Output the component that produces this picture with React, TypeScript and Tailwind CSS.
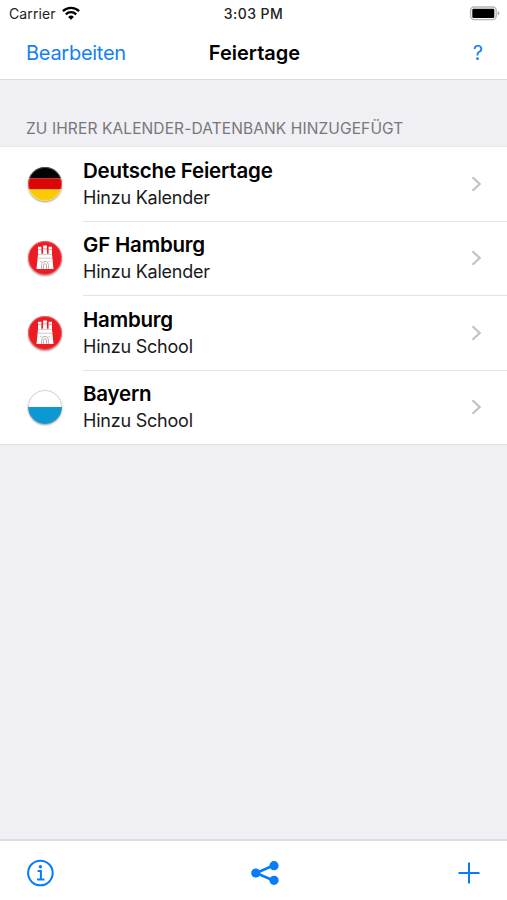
import clsx from "clsx"

type FlagName = "germany" | "hamburg" | "bavaria"

interface Holiday {
  id: number
  title: string
  subtitle: string
  flag: FlagName
}

const holidays: Holiday[] = [
  { id: 1, title: "Deutsche Feiertage", subtitle: "Hinzu Kalender", flag: "germany" },
  { id: 2, title: "GF Hamburg", subtitle: "Hinzu Kalender", flag: "hamburg" },
  { id: 3, title: "Hamburg", subtitle: "Hinzu School", flag: "hamburg" },
  { id: 4, title: "Bayern", subtitle: "Hinzu School", flag: "bavaria" },
]

function GermanyFlag() {
  return (
    <>
      <path d="M0 0h34v11.5H0z" fill="#050303" />
      <path d="M0 11.5h34v11H0z" fill="#dc0505" />
      <path d="M0 22.5h34V34H0z" fill="#fcca05" />
    </>
  )
}

function BavariaFlag() {
  return (
    <>
      <path d="M0 0h34v17H0z" fill="#fff" />
      <path d="M0 17h34v17H0z" fill="#0c98d3" />
    </>
  )
}

function HamburgFlag() {
  return (
    <>
      <path d="M0 0h34v34H0z" fill="#ec1c24" />
      {/* castle: three towers over the wall */}
      <path
        d="M8.5 28 10 13.2V5.8h3.4v7h1.7V4.6h3.8v8.2h1.7v-7H24v7.4L25.5 28Z"
        fill="#fff"
      />
      <path d="M10 8.6h3.4M15.1 7.8h3.8M20.6 8.6H24" stroke="#ec1c24" strokeOpacity=".55" strokeWidth=".8" />
      <path d="M10.2 13.4h13.6M9.8 17.2h14.4M12 20.5h1.5M20.5 20.5H22" stroke="#c9b9b9" strokeWidth=".8" fill="none" />
      <path d="M13.6 28v-4.3a3.4 3.4 0 0 1 6.8 0V28M15.5 28v-3.8a1.5 1.5 0 0 1 3 0V28" fill="none" stroke="#b9a5a5" strokeWidth=".9" />
    </>
  )
}

function Flag({ name }: { name: FlagName }) {
  return (
    <span className="block size-[34px] shrink-0 rounded-full shadow-[0_1px_2px_rgba(0,0,0,0.4)] overflow-hidden">
      <svg viewBox="0 0 34 34" className="block size-full">
        {name === "germany" && <GermanyFlag />}
        {name === "hamburg" && <HamburgFlag />}
        {name === "bavaria" && <BavariaFlag />}
        <circle
          cx="17"
          cy="17"
          r="16.5"
          fill="none"
          stroke={name === "bavaria" ? "#888" : "#fff"}
          strokeOpacity={name === "bavaria" ? 0.4 : 0.3}
        />
      </svg>
    </span>
  )
}

function WifiIcon() {
  return (
    <svg width="18" height="14" viewBox="0 0 18 14" fill="none" stroke="#000" strokeWidth="2.3" className="-mt-[2px]">
      <path d="M.9 5.1a11.6 11.6 0 0 1 16.2 0" />
      <path d="M3.8 8.3a7.5 7.5 0 0 1 10.4 0" />
      <path d="M9 13.8 6.1 10.9a4.2 4.2 0 0 1 5.8 0Z" fill="#000" stroke="none" />
    </svg>
  )
}

function BatteryIcon() {
  return (
    <svg width="32" height="16" viewBox="0 0 32 16">
      <rect x="1.6" y="1" width="25.6" height="12.6" rx="3.5" fill="#fff" stroke="#b5b5b5" strokeWidth="1.4" />
      <rect x="3.3" y="2.7" width="22" height="9.2" rx="1.2" fill="#000" />
      <path d="M28.7 5.3c2.4.7 2.4 3.3 0 4Z" fill="#aaa" />
    </svg>
  )
}

function StatusBar() {
  return (
    <div className="h-[27px] grid grid-cols-3 items-center pl-[9px] pr-[6px] text-[14px] text-[#222]">
      <div className="flex items-center gap-[6px]">
        <span className="tracking-[0.1px]">Carrier</span>
        <WifiIcon />
      </div>
      <span className="pr-[3px] text-center font-medium tracking-[0.45px]">3:03 PM</span>
      <div className="flex justify-end">
        <BatteryIcon />
      </div>
    </div>
  )
}

function NavBar() {
  return (
    <div className="h-[53px] grid grid-cols-3 items-center pl-[26px] pr-[24px] pb-px border-b border-[#dcdcde] text-[20px]">
      <button className="text-left tracking-[-0.27px] text-[#1580f5]">Bearbeiten</button>
      <h1 className="text-center font-semibold text-black">Feiertage</h1>
      <button className="text-right text-[#1580f5]">?</button>
    </div>
  )
}

function HolidayRow({ holiday, isLast }: { holiday: Holiday; isLast: boolean }) {
  return (
    <li className={clsx("flex pl-[28px]", isLast ? "h-[73.6px]" : "h-[74.5px]")}>
      <div className="pt-[19.6px]">
        <Flag name={holiday.flag} />
      </div>
      <div className={clsx("ml-[21px] flex flex-1 justify-between pr-[25px]", !isLast && "border-b border-[#e4e4e6]")}>
        <div className="pt-[9.6px] whitespace-nowrap text-black">
          <p className="text-[20.5px] leading-[27px] font-semibold tracking-[-0.2px]">{holiday.title}</p>
          <p className="text-[18px] leading-[27px] tracking-[-0.22px] text-[#1a1a1a]">{holiday.subtitle}</p>
        </div>
        <svg width="11" height="16" viewBox="0 0 11 16" className="mt-[28.6px]" fill="none" stroke="#c2c2c5" strokeWidth="2.2">
          <path d="m1.5 1.2 7.2 6.8-7.2 6.8" />
        </svg>
      </div>
    </li>
  )
}

function Toolbar() {
  return (
    <div className="h-[61px] grid grid-cols-3 items-center pt-[4px] pl-[26px] pr-[27px] border-t-2 border-[#dddde1] bg-white text-[#087cf8]">
      <svg width="28" height="28" viewBox="0 0 28 28" fill="none" stroke="currentColor" strokeWidth="2">
        <circle cx="14.4" cy="14" r="12.3" />
        <path d="M11.6 12h3.3v7.8M11 20.4h7.4" />
        <circle cx="14.4" cy="7.8" r="1.7" fill="currentColor" stroke="none" />
      </svg>
      <svg width="28" height="24" viewBox="0 0 28 24" className="ml-[74px]" fill="currentColor">
        <path d="M22.5 4.5 5 12l17.5 7.5" fill="none" stroke="currentColor" strokeWidth="2.7" />
        <circle cx="4.8" cy="12" r="4.6" />
        <circle cx="23" cy="4.7" r="4.6" />
        <circle cx="23" cy="19.3" r="4.6" />
      </svg>
      <svg width="22" height="22" viewBox="0 0 22 22" className="justify-self-end" stroke="currentColor" strokeWidth="2">
        <path d="M11 .5v21M.5 11h21" />
      </svg>
    </div>
  )
}

export default function App() {
  return (
    <div className="h-screen flex flex-col bg-[#efeff4] font-[Inter,sans-serif]">
      <header className="bg-white">
        <StatusBar />
        <NavBar />
      </header>

      <main className="flex-1">
        <h2 className="h-[67.4px] pt-[38px] pl-[26px] text-[15.5px] leading-[22px] tracking-[0.11px] text-[#77777b] whitespace-nowrap border-b border-[#e8e8ec]">
          ZU IHRER KALENDER-DATENBANK HINZUGEFÜGT
        </h2>
        <ul className="bg-white border-b border-[#e0e0e4]">
          {holidays.map((holiday, index) => (
            <HolidayRow key={holiday.id} holiday={holiday} isLast={index === holidays.length - 1} />
          ))}
        </ul>
      </main>

      <Toolbar />
    </div>
  )
}
